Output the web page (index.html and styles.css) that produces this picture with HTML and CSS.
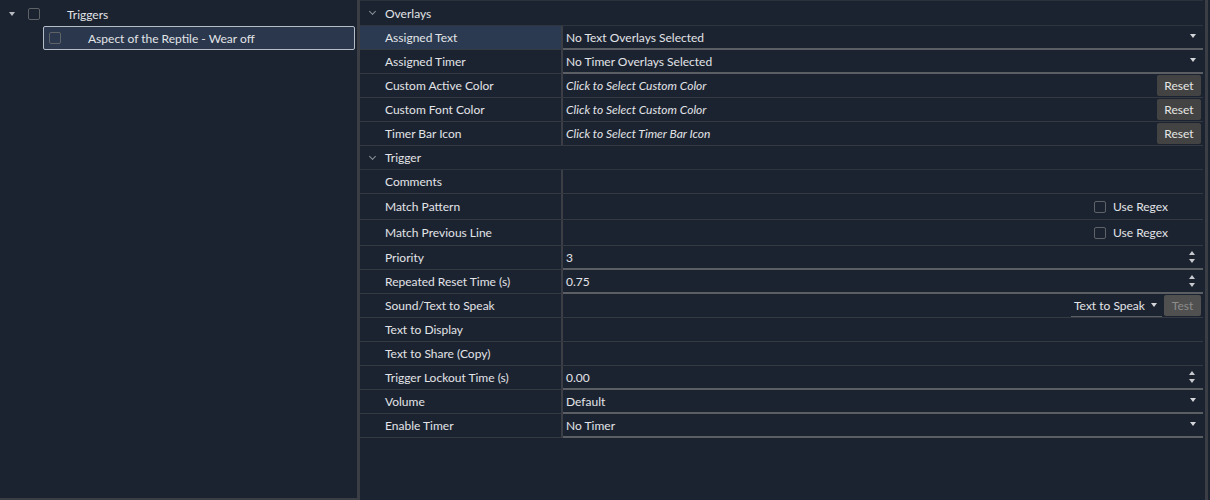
FILE: index.html
```html
<!DOCTYPE html>
<html lang="en">
<head>
    <meta charset="UTF-8">
    <title>Triggers</title>
    <link rel="stylesheet" href="styles.css">
</head>
<body>
    <div class="app">
        <div class="tree-panel">
            <div class="tree-row">
                <span class="expander"></span>
                <span class="check"></span>
                <span class="tree-label">Triggers</span>
            </div>
            <div class="tree-row child selected">
                <span class="check"></span>
                <span class="tree-label">Aspect of the Reptile - Wear off</span>
            </div>
        </div>
        <div class="splitter"></div>
        <div class="props-panel">
            <div class="group-head"><span class="chev"></span>Overlays</div>
            <div class="prop-row active">
                <div class="prop-name">Assigned Text</div>
                <div class="prop-value combo">No Text Overlays Selected<span class="arrow"></span></div>
            </div>
            <div class="prop-row">
                <div class="prop-name">Assigned Timer</div>
                <div class="prop-value combo">No Timer Overlays Selected<span class="arrow"></span></div>
            </div>
            <div class="prop-row">
                <div class="prop-name">Custom Active Color</div>
                <div class="prop-value"><em>Click to Select Custom Color</em><button class="btn">Reset</button></div>
            </div>
            <div class="prop-row">
                <div class="prop-name">Custom Font Color</div>
                <div class="prop-value"><em>Click to Select Custom Color</em><button class="btn">Reset</button></div>
            </div>
            <div class="prop-row">
                <div class="prop-name">Timer Bar Icon</div>
                <div class="prop-value"><em>Click to Select Timer Bar Icon</em><button class="btn">Reset</button></div>
            </div>
            <div class="group-head"><span class="chev"></span>Trigger</div>
            <div class="prop-row">
                <div class="prop-name">Comments</div>
                <div class="prop-value"></div>
            </div>
            <div class="prop-row tall">
                <div class="prop-name">Match Pattern</div>
                <div class="prop-value"><label class="regex"><span class="check"></span>Use Regex</label></div>
            </div>
            <div class="prop-row tall">
                <div class="prop-name">Match Previous Line</div>
                <div class="prop-value"><label class="regex"><span class="check"></span>Use Regex</label></div>
            </div>
            <div class="prop-row">
                <div class="prop-name">Priority</div>
                <div class="prop-value spin">3<span class="spinner"></span></div>
            </div>
            <div class="prop-row">
                <div class="prop-name">Repeated Reset Time (s)</div>
                <div class="prop-value spin">0.75<span class="spinner"></span></div>
            </div>
            <div class="prop-row">
                <div class="prop-name">Sound/Text to Speak</div>
                <div class="prop-value">
                    <span class="mini-combo">Text to Speak<span class="arrow"></span></span>
                    <button class="btn disabled">Test</button>
                </div>
            </div>
            <div class="prop-row">
                <div class="prop-name">Text to Display</div>
                <div class="prop-value"></div>
            </div>
            <div class="prop-row">
                <div class="prop-name">Text to Share (Copy)</div>
                <div class="prop-value"></div>
            </div>
            <div class="prop-row">
                <div class="prop-name">Trigger Lockout Time (s)</div>
                <div class="prop-value spin">0.00<span class="spinner"></span></div>
            </div>
            <div class="prop-row">
                <div class="prop-name">Volume</div>
                <div class="prop-value combo">Default<span class="arrow"></span></div>
            </div>
            <div class="prop-row">
                <div class="prop-name">Enable Timer</div>
                <div class="prop-value combo">No Timer<span class="arrow"></span></div>
            </div>
        </div>
        <div class="edge"></div>
    </div>
</body>
</html>
```

FILE: styles.css
```css
body {
    margin: 0;
    background-color: #1c2330;
    font-family: 'Lato', 'Noto Sans', sans-serif;
    font-size: 12px;
    color: #e2e4e8;
}
.app {
    display: flex;
    height: 500px;
}
.tree-panel {
    width: 357px;
    box-sizing: border-box;
    border-bottom: 2px solid #3b3e44;
    padding-top: 2px;
}
.tree-row {
    display: flex;
    align-items: center;
    height: 24px;
}
.expander {
    width: 0;
    height: 0;
    margin-left: 9px;
    margin-right: 13px;
    border-left: 3px solid transparent;
    border-right: 3px solid transparent;
    border-top: 4px solid #b8bcc2;
}
.check {
    display: inline-block;
    width: 10px;
    height: 10px;
    border: 1.5px solid #5f6266;
    border-radius: 2px;
}
.tree-row .check {
    margin-right: 27px;
}
.tree-row.child .check {
    margin-right: 27px;
}
.tree-row.child {
    margin-left: 43px;
    margin-right: 2px;
    padding-left: 5px;
    box-sizing: border-box;
    height: 24px;
}
.tree-row.selected {
    background-color: #2a374c;
    border: 1px solid #b4bcc6;
    border-radius: 2px;
}
.splitter {
    width: 3px;
    background-color: #3b3e44;
}
.props-panel {
    flex: 1;
    border-top: 1px solid #2c323b;
}
.edge {
    width: 7px;
    background: linear-gradient(to right, #1c2330 2px, #3b3e44 2px, #3b3e44 5px, #1c2330 5px);
}
.group-head {
    display: flex;
    align-items: center;
    height: 23px;
    padding-left: 10px;
    border-bottom: 1px solid #2f353e;
}
.group-head:first-child {
    height: 24px;
}
.chev {
    width: 4px;
    height: 4px;
    margin-right: 10px;
    margin-top: -3px;
    border-right: 1px solid #8a9099;
    border-bottom: 1px solid #8a9099;
    transform: rotate(45deg);
}
.prop-row {
    display: flex;
    height: 23px;
    border-bottom: 1px solid #353a42;
}
.prop-row.tall {
    height: 25px;
}
.prop-row.active .prop-name {
    background-color: #2b3a50;
}
.prop-name {
    width: 176px;
    padding-left: 25px;
    display: flex;
    align-items: center;
    border-right: 2px solid #3b3e44;
}
.prop-value {
    flex: 1;
    display: flex;
    align-items: center;
    padding-left: 3px;
    padding-right: 2px;
    position: relative;
}
.prop-value em {
    flex: 1;
}
.combo, .spin {
    border-bottom: 2px solid #5b5e63;
    margin-bottom: -1px;
}
.arrow {
    position: absolute;
    right: 7px;
    top: 8px;
    width: 0;
    height: 0;
    border-left: 3.5px solid transparent;
    border-right: 3.5px solid transparent;
    border-top: 4px solid #d4d6da;
}
.spinner {
    position: absolute;
    right: 7px;
    top: 5px;
    width: 7px;
    height: 12px;
}
.spinner::before, .spinner::after {
    content: "";
    position: absolute;
    left: 0;
    border-left: 3.5px solid transparent;
    border-right: 3.5px solid transparent;
}
.spinner::before {
    top: 0;
    border-bottom: 4px solid #c8cacd;
}
.spinner::after {
    bottom: 0;
    border-top: 4px solid #c8cacd;
}
.btn {
    margin-left: auto;
    height: 21px;
    width: 44px;
    border: none;
    border-radius: 2px;
    background-color: #434343;
    color: #e6e6e6;
    font-family: inherit;
    font-size: 12px;
    padding: 0;
}
.btn.disabled {
    width: 37px;
    margin-left: 2px;
    background-color: #505050;
    color: #8c8c8c;
}
.regex {
    margin-left: auto;
    margin-right: 33px;
    display: flex;
    align-items: center;
}
.regex .check {
    margin-right: 7px;
}
.mini-combo {
    margin-left: auto;
    position: relative;
    width: 91px;
    padding-left: 3px;
    height: 22px;
    line-height: 22px;
    box-sizing: border-box;
    border-bottom: 1px solid #5b5e63;
}
.mini-combo .arrow {
    right: 5px;
    top: 8px;
}
```
